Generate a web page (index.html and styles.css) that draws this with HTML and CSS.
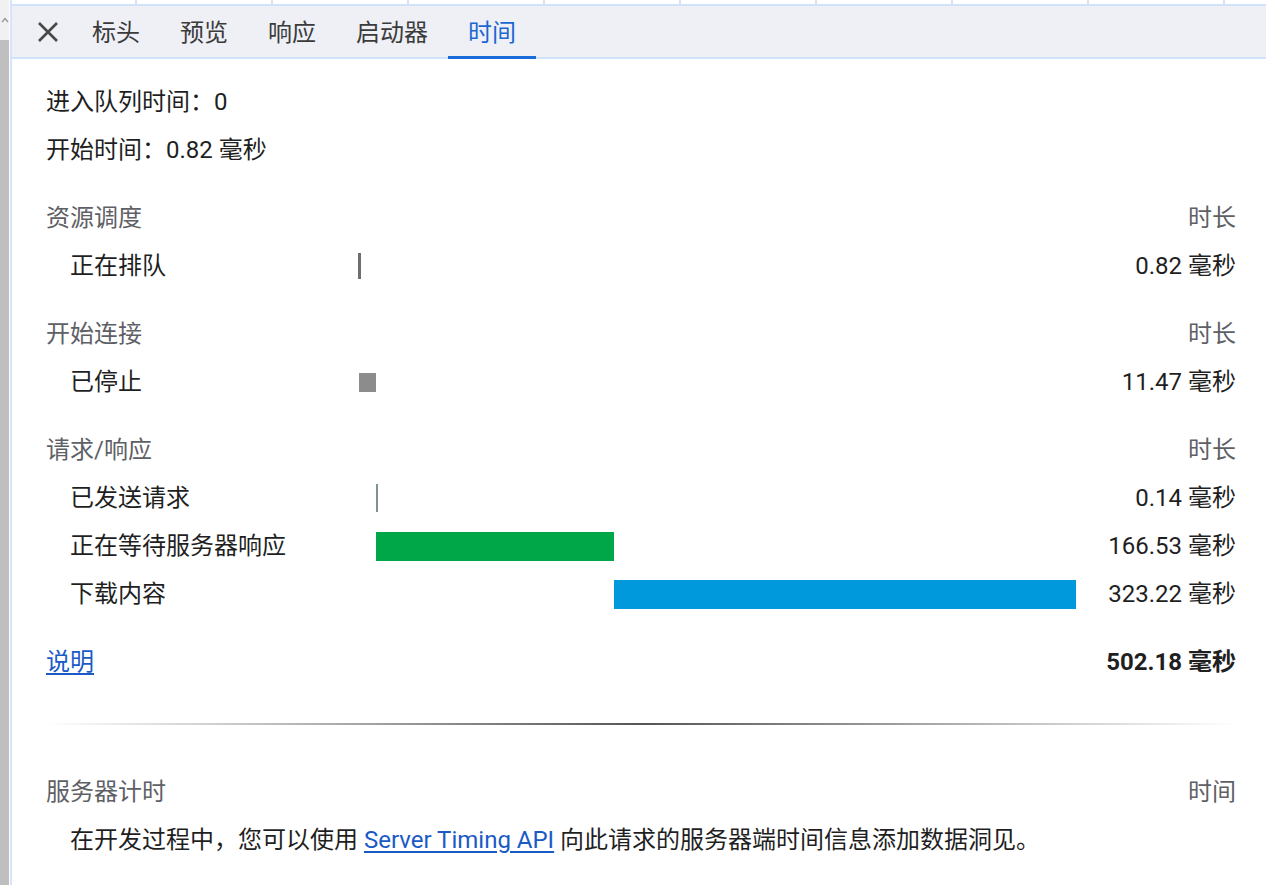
FILE: index.html
```html
<!DOCTYPE html>
<html lang="zh-CN">
<head>
    <meta charset="UTF-8">
    <meta name="viewport" content="width=device-width, initial-scale=1.0">
    <title>时间</title>
    <link rel="stylesheet" href="styles.css">
</head>
<body>
    <div class="scrollbar">
        <div class="scroll-arrow">
            <svg width="8" height="6" viewBox="0 0 8 6"><path d="M1 5 L4 1.5 L7 5" fill="none" stroke="#9a9a9a" stroke-width="1.4"/></svg>
        </div>
        <div class="scroll-thumb"></div>
    </div>

    <div class="panel">
        <div class="grid-edge"></div>

        <div class="tabbar">
            <button class="close-btn" aria-label="关闭">
                <svg width="22" height="22" viewBox="0 0 22 22"><path d="M2 2 L20 20 M20 2 L2 20" stroke="#474747" stroke-width="2.6" fill="none"/></svg>
            </button>
            <div class="tab">标头</div>
            <div class="tab">预览</div>
            <div class="tab">响应</div>
            <div class="tab">启动器</div>
            <div class="tab active">时间</div>
        </div>

        <div class="content">
            <div class="meta">进入队列时间：0</div>
            <div class="meta">开始时间：0.82 毫秒</div>

            <div class="group">
                <div class="row head">
                    <span class="label">资源调度</span>
                    <span></span>
                    <span class="dur">时长</span>
                </div>
                <div class="row">
                    <span class="label sub">正在排队</span>
                    <div class="track"><div class="bar queue" style="margin-left:0%;"></div></div>
                    <span class="dur">0.82 毫秒</span>
                </div>
            </div>

            <div class="group">
                <div class="row head">
                    <span class="label">开始连接</span>
                    <span></span>
                    <span class="dur">时长</span>
                </div>
                <div class="row">
                    <span class="label sub">已停止</span>
                    <div class="track"><div class="bar stalled" style="margin-left:0.163%;width:2.284%;"></div></div>
                    <span class="dur">11.47 毫秒</span>
                </div>
            </div>

            <div class="group">
                <div class="row head">
                    <span class="label">请求/响应</span>
                    <span></span>
                    <span class="dur">时长</span>
                </div>
                <div class="row">
                    <span class="label sub">已发送请求</span>
                    <div class="track"><div class="bar sent" style="margin-left:2.447%;"></div></div>
                    <span class="dur">0.14 毫秒</span>
                </div>
                <div class="row">
                    <span class="label sub">正在等待服务器响应</span>
                    <div class="track"><div class="bar waiting" style="margin-left:2.475%;width:33.16%;"></div></div>
                    <span class="dur">166.53 毫秒</span>
                </div>
                <div class="row">
                    <span class="label sub">下载内容</span>
                    <div class="track"><div class="bar download" style="margin-left:35.64%;width:64.36%;"></div></div>
                    <span class="dur">323.22 毫秒</span>
                </div>
            </div>

            <div class="group">
                <div class="row">
                    <a class="label link" href="#">说明</a>
                    <span></span>
                    <span class="dur total">502.18 毫秒</span>
                </div>
            </div>

            <div class="divider"></div>

            <div class="row head">
                <span class="label">服务器计时</span>
                <span></span>
                <span class="dur">时间</span>
            </div>
            <p class="note">在开发过程中，您可以使用 <a class="link" href="#">Server Timing API</a> 向此请求的服务器端时间信息添加数据洞见。</p>
        </div>
    </div>
</body>
</html>
```

FILE: styles.css
```css
body {
    margin: 0;
    height: 885px;
    overflow: hidden;
    display: flex;
    background: #fff;
    font-family: Roboto, "Noto Sans CJK SC", sans-serif;
    font-size: 24px;
    color: #1f1f1f;
}

/* barre de défilement de la liste à gauche */
.scrollbar {
    width: 9px;
    min-width: 9px;
    flex: none;
    display: flex;
    flex-direction: column;
    background: #f1f1f1;
}

.scroll-arrow {
    height: 40px;
    display: flex;
    justify-content: center;
    align-items: center;
}

.scroll-thumb {
    flex: 1;
    background: #bfbfbf;
}

.panel {
    flex: 1;
    margin-left: 1px;
    border-left: 2px solid #d6e3fa;
    display: flex;
    flex-direction: column;
}

.grid-edge {
    height: 4px;
    background: repeating-linear-gradient(to right, transparent 0 134px, #dcdff0 134px 136px);
    background-position: -11px 0;
    border-bottom: 2px solid #d3e2fb;
}

.tabbar {
    height: 51px;
    display: flex;
    align-items: stretch;
    background: #eef0f6;
    border-bottom: 2px solid #d3e2fb;
}

.close-btn {
    width: 48px;
    margin-left: 12px;
    padding: 0;
    border: none;
    background: none;
    display: flex;
    justify-content: center;
    align-items: center;
}

.tab {
    padding: 0 20px;
    display: flex;
    align-items: center;
    color: #3b3b3b;
    line-height: 1;
    border-bottom: 3px solid transparent;
    margin-bottom: -2px;
    padding-top: 3px;
}

.tab.active {
    color: #1a66d2;
    border-bottom-color: #1a6cdb;
}

.content {
    padding: 19px 30px 0 34px;
}

.meta {
    height: 48px;
    line-height: 48px;
}

.group {
    margin-top: 20px;
}

.row {
    display: grid;
    grid-template-columns: 312px 1fr 160px;
    align-items: center;
    height: 48px;
    line-height: 48px;
}

.row.head {
    color: #5e6066;
}

.label.sub {
    padding-left: 24px;
}

.dur {
    text-align: right;
    white-space: nowrap;
}

.total {
    font-weight: bold;
}

.link {
    color: #1a5ac6;
    text-decoration: underline;
    text-underline-offset: 3px;
}

.label.link {
    justify-self: start;
}

.track {
    display: flex;
    align-items: center;
    height: 48px;
}

.bar {
    flex: none;
}

.bar.queue {
    width: 3px;
    height: 26px;
    background: #6e6e6e;
}

.bar.stalled {
    height: 19px;
    background: #8c8c8c;
}

.bar.sent {
    width: 2px;
    height: 28px;
    background: #7f9293;
}

.bar.waiting {
    height: 29px;
    background: #00a748;
}

.bar.download {
    height: 29px;
    background: #0099dc;
}

.divider {
    height: 2px;
    margin: 37px 0 43px;
    background: linear-gradient(to right, rgba(80, 80, 80, 0), #555 50%, rgba(80, 80, 80, 0));
}

.note {
    margin: 0;
    padding-left: 24px;
    height: 48px;
    line-height: 48px;
}
```
